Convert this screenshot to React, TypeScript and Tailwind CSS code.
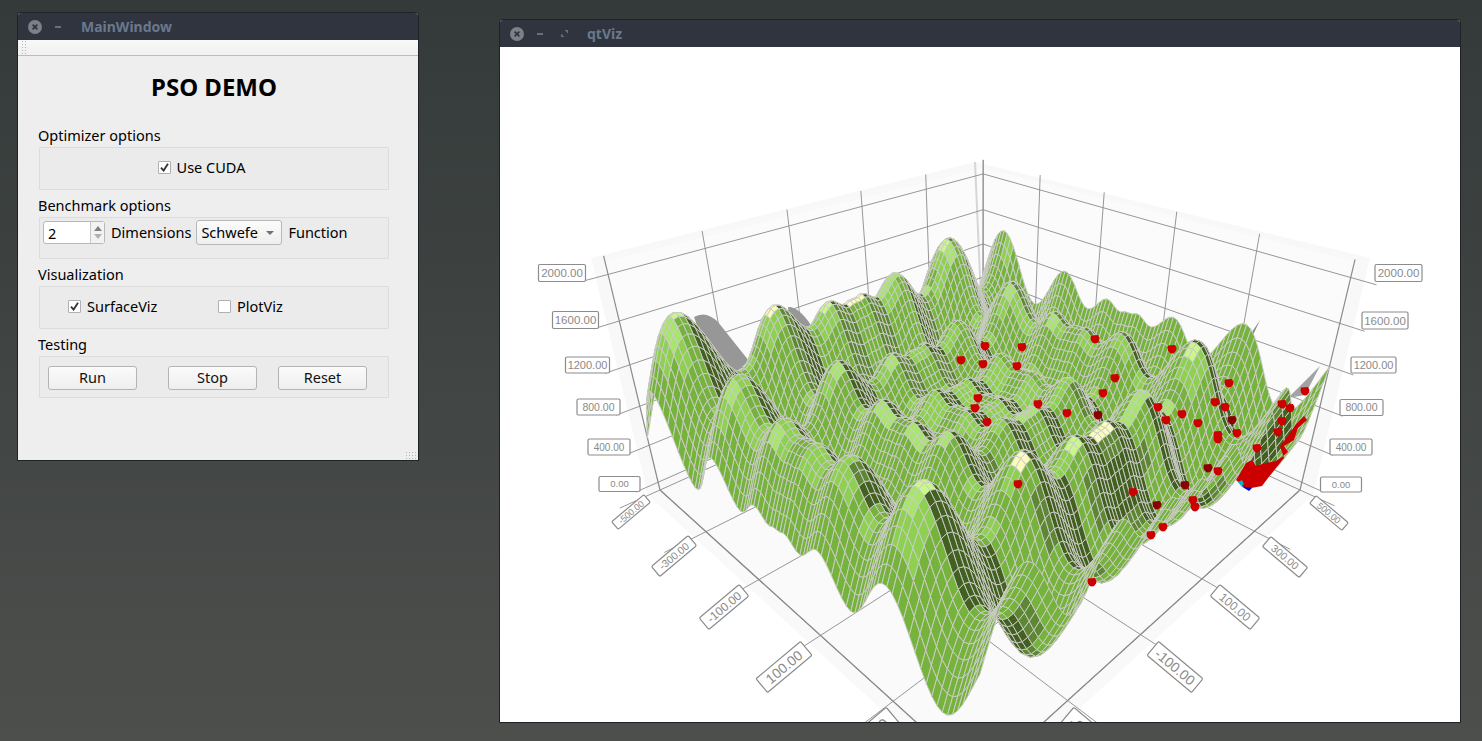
import React, { useMemo } from "react";

// ---------- projection of the 3D chart, in page coordinates ----------
const back = [983, 345], left = [660, 490], front = [980, 780], right = [1300, 490];
const den = (left[0] - front[0]) * (right[1] - front[1]) - (right[0] - front[0]) * (left[1] - front[1]);
const sx = back[0] - left[0] + front[0] - right[0];
const sy = back[1] - left[1] + front[1] - right[1];
const g = (sx * (right[1] - front[1]) - (right[0] - front[0]) * sy) / den;
const h = ((left[0] - front[0]) * sy - sx * (left[1] - front[1])) / den;
const H = [
  [left[0] - back[0] + g * left[0], right[0] - back[0] + h * right[0], back[0]],
  [left[1] - back[1] + g * left[1], right[1] - back[1] + h * right[1], back[1]],
  [g, h, 1],
];
const Za = -106, Zb = -197, Zc = -0.108;

function proj(s: number, t: number, z: number): [number, number, number] {
  const w = H[2][0] * s + H[2][1] * t + 1 + Zc * z;
  return [
    (H[0][0] * s + H[0][1] * t + H[0][2] + Za * z) / w,
    (H[1][0] * s + H[1][1] * t + H[1][2] + Zb * z) / w,
    w,
  ];
}
const zz = (v: number) => 0.04 + (0.92 * v) / 2000;
const schwefel = (a: number, b: number) =>
  837.96 - a * Math.sin(Math.sqrt(Math.abs(a))) - b * Math.sin(Math.sqrt(Math.abs(b)));
const fn = (s: number, t: number) => schwefel(-500 + 1000 * t, -500 + 1000 * (1 - s));

const pts = (arr: number[][]) => arr.map((p) => `${p[0].toFixed(1)},${p[1].toFixed(1)}`).join(" ");

function shade(dark: number, bright: number) {
  if (dark < -0.2) return "#42601f";
  if (dark < -0.06) return "#5d8733";
  if (bright < 0.8) return "#76b33d";
  if (bright < 0.9) return "#8ed052";
  if (bright < 0.96) return "#a8e56e";
  if (bright < 0.995) return "#c9f78d";
  return "#fbfbbd";
}

const N = 88;
function buildSurface() {
  const P = [0.1, -1.0, 1.4];
  const B0 = [0.35, -0.6, 1];
  const Bm = Math.hypot(B0[0], B0[1], B0[2]);
  const cells: { p: string; c: string; d: number }[] = [];
  const v: number[][] = [];
  for (let i = 0; i <= N; i++) {
    v.push([]);
    for (let j = 0; j <= N; j++) v[i].push(fn(i / N, j / N));
  }
  const C = 2;
  for (let i = 0; i < N; i++) {
    for (let j = 0; j < N; j++) {
      const q = [
        proj(i / N, j / N, zz(v[i][j])),
        proj((i + 1) / N, j / N, zz(v[i + 1][j])),
        proj((i + 1) / N, (j + 1) / N, zz(v[i + 1][j + 1])),
        proj(i / N, (j + 1) / N, zz(v[i][j + 1])),
      ];
      const ci = Math.min(N - C, i - (i % C));
      const cj = Math.min(N - C, j - (j % C));
      const du = (1000 * C) / N;
      const fa = (v[ci][cj + C] + v[ci + C][cj + C] - v[ci][cj] - v[ci + C][cj]) / (2 * du);
      const fb = (v[ci][cj] + v[ci][cj + C] - v[ci + C][cj] - v[ci + C][cj + C]) / (2 * du);
      const nx = -fa * 0.45, ny = -fb * 0.45, nz = 1;
      const m = Math.hypot(nx, ny, nz);
      const x = (cj + C / 2) / N, y = 1 - (ci + C / 2) / N, z = v[ci][cj] / 2000;
      const lx = P[0] - x, ly = P[1] - y, lz = P[2] - z;
      const lm = Math.hypot(lx, ly, lz);
      const D = (nx * lx + ny * ly + nz * lz) / (m * lm) - 0.18 * Math.max(0, x - 0.45);
      // highlights sit on the high ground: the saddles stay plain green
      const Br = (nx * B0[0] + ny * B0[1] + nz * B0[2]) / (m * Bm) + 0.5 * (v[ci][cj] / 1676 - 0.62);
      const d = (q[0][2] + q[1][2] + q[2][2] + q[3][2]) / 4;
      cells.push({ p: pts(q), c: shade(D, Br), d });
    }
  }
  cells.sort((a, b) => b.d - a.d);
  return cells;
}

const dots: [number, number, string?][] = [
  [961, 360], [985, 346], [983, 364], [978, 398], [975, 408], [987, 422], [1095, 339], [1022, 347], [1017, 366],
  [1115, 378], [1103, 393], [1038, 404], [1067, 413], [1098, 415, "#8a0000"], [1172, 349], [1229, 383], [1215, 402],
  [1225, 407], [1182, 414], [1198, 423], [1166, 420], [1158, 407], [1218, 435], [1218, 439], [1282, 404], [1305, 391],
  [1282, 421], [1278, 432], [1290, 408], [1237, 433], [1232, 420, "#8a0000"], [1018, 484], [1133, 492],
  [1157, 505, "#8a0000"], [1185, 485, "#8a0000"], [1218, 471], [1208, 468, "#8a0000"], [1257, 448], [1195, 507],
  [1193, 500], [1092, 582], [1163, 527], [1151, 535],
];

function Label({ x, y, w, hh, text, rot = 0, fs = 11 }: { x: number; y: number; w: number; hh: number; text: string; rot?: number; fs?: number }) {
  return (
    <g transform={`translate(${x} ${y}) rotate(${rot})`}>
      <rect x={-w / 2} y={-hh / 2} width={w} height={hh} rx={1.5} fill="#fff" stroke="#8c8c8c" strokeWidth={1.2} />
      <text x={0} y={fs * 0.36} textAnchor="middle" fontSize={fs} fill="#8a8a8a" fontFamily="'Liberation Sans', sans-serif">
        {text}
      </text>
    </g>
  );
}

function Chart() {
  const cells = useMemo(buildSurface, []);
  const ticks = [0, 0.2, 0.4, 0.6, 0.8, 1];
  const zs = [0, 400, 800, 1200, 1600, 2000];
  const gc = "#8b8b8b";
  const line = (a: number[], b: number[], k: string, w = 0.9) => (
    <line key={k} x1={a[0]} y1={a[1]} x2={b[0]} y2={b[1]} stroke={gc} strokeWidth={w} />
  );
  return (
    <svg viewBox="500 47 960 675" className="block h-[675px] w-[960px]">
      {/* walls and floor */}
      <polygon points="591,258 975,162 983,345 648,495" fill="#f8f8f8" />
      <polygon points="1370,258 975,162 983,345 1313,495" fill="#f8f8f8" />
      <polygon points="603,262 983,168 983,345 658,480" fill="#fbfbfb" />
      <polygon points="1357,262 983,168 983,345 1302,480" fill="#fbfbfb" />
      <polygon points="648,495 983,345 1313,495 980,800" fill="#f9f9f9" />
      <polygon points="655,497 983,352 1305,497 980,770" fill="#fafafa" />
      <line x1={975} y1={162} x2={983} y2={345} stroke="#d6d6d6" strokeWidth={2} />
      {/* grid */}
      {ticks.map((u) => {
        const a = proj(u, 0, 0), b = proj(u, 0, 1.03);
        const c = proj(0, u, 0), d = proj(0, u, 1.03);
        return (
          <g key={u}>
            {line(a, b, "a", u === 1 ? 1.2 : 0.9)}
            {line(c, d, "c", u === 1 ? 1.2 : 0.9)}
            {line(proj(u, -0.0, 0), proj(u, 1.08, 0), "f1")}
            {line(proj(0, u, 0), proj(1.09, u, 0), "f2")}
          </g>
        );
      })}
      {zs.map((v) => {
        const z = zz(v);
        return (
          <g key={v}>
            {line(proj(0, 0, z), proj(1.05, 0, z), "l")}
            {line(proj(0, 0, z), proj(0, 1.05, z), "r")}
          </g>
        );
      })}
      {line(proj(1, 0, 0), proj(1, 1.1, 0), "ax1", 1.3)}
      {line(proj(0, 1, 0), proj(1.1, 1, 0), "ax2", 1.3)}

      {/* hidden grey faces behind the surface */}
      <path d="M694 317 Q706 310 718 322 L749 361 L735 373 L702 340 Z" fill="#979797" />
      <path d="M788 307 Q798 306 811 325 L805 332 L790 320 Z" fill="#979797" />
      <path d="M1288 398 L1320 366 L1305 395 Z" fill="#a3a3a3" />
      <path d="M1236 372 L1260 320 L1240 350 Z" fill="#8a8a8a" />

      {/* surface */}
      <g stroke="#cbcbc7" strokeWidth={0.95} strokeLinejoin="round">
        {cells.map((c, i) => (
          <polygon key={i} points={c.p} fill={c.c} />
        ))}
      </g>

      {/* particles */}
      <g fill="#cc0000">
        <path d="M1236 480 L1242 470 L1246 463 L1252 460 L1256 466 L1262 464 L1276 461 L1282 457 L1288 452 L1284 446 L1294 440 L1298 428 L1307 420 L1304 416 L1296 424 L1288 436 L1280 446 L1284 458 L1268 478 L1262 486 L1246 489 Z" />
        {dots.map(([x, y, c], i) => (
          <path key={i} transform={`translate(${x} ${y})`} d="M-4 -3.5 L3 -4 L4.5 -1 L4 1.5 Q2.5 4.5 0 4.5 Q-2.5 4.5 -4 1.5 L-4.5 -1 Z" fill={c} />
        ))}
      </g>
      <path d="M1238 482 L1242 480 L1244 484 L1241 486 Z" fill="#00b8c8" />
      <path d="M1241 486 L1252 488 L1249 491 Z" fill="#0000cc" />

      {/* axis labels */}
      <Label x={562} y={273} w={47} hh={17} text="2000.00" fs={11.5} />
      <Label x={575.5} y={320} w={46} hh={17} text="1600.00" fs={11.5} />
      <Label x={587.5} y={365} w={44} hh={16} text="1200.00" fs={11} />
      <Label x={598.5} y={407} w={43} hh={16} text="800.00" fs={10.5} />
      <Label x={609} y={447} w={42} hh={16} text="400.00" fs={10} />
      <Label x={619.5} y={484} w={41} hh={15} text="0.00" fs={9.5} />
      <Label x={1398.5} y={273} w={47} hh={17} text="2000.00" fs={11.5} />
      <Label x={1385} y={320.5} w={46} hh={17} text="1600.00" fs={11.5} />
      <Label x={1373.5} y={365} w={45} hh={16} text="1200.00" fs={11} />
      <Label x={1361.5} y={407.5} w={43} hh={16} text="800.00" fs={10.5} />
      <Label x={1351} y={447} w={42} hh={16} text="400.00" fs={10} />
      <Label x={1341} y={484.5} w={41} hh={15} text="0.00" fs={9.5} />
      <Label x={631} y={512} w={42} hh={10} rot={-40} text="-500.00" fs={9} />
      <Label x={674} y={556} w={48} hh={13} rot={-40} text="-300.00" fs={10.5} />
      <Label x={724} y={607} w={52} hh={15} rot={-40} text="-100.00" fs={12} />
      <Label x={784} y={667} w={58} hh={18} rot={-40} text="100.00" fs={14} />
      <Label x={868} y={737} w={66} hh={22} rot={-40} text="300.00" fs={16} />
      <Label x={1329} y={513} w={42} hh={10} rot={40} text="500.00" fs={9} />
      <Label x={1285} y={557} w={48} hh={13} rot={40} text="300.00" fs={10.5} />
      <Label x={1235} y={607} w={52} hh={15} rot={40} text="100.00" fs={12} />
      <Label x={1175} y={667} w={58} hh={18} rot={40} text="-100.00" fs={14} />
      <Label x={1092} y={737} w={66} hh={22} rot={40} text="-300.00" fs={16} />
    </svg>
  );
}

function TitleBar({ title, maxIcon }: { title: string; maxIcon?: boolean }) {
  return (
    <div className="flex h-[27px] shrink-0 items-center rounded-t-[3px] bg-[#2f343f] pl-[10px]">
      <svg width="14" height="14" viewBox="0 0 14 14" className="shrink-0">
        <circle cx="7" cy="7" r="7" fill="#7c8087" />
        <path d="M4.6 4.6 L9.4 9.4 M9.4 4.6 L4.6 9.4" stroke="#2f343f" strokeWidth="1.7" />
      </svg>
      <div className="ml-[13px] h-[2px] w-[6px] shrink-0 bg-[#6a6e75]" />
      {maxIcon ? (
        <svg width="7" height="7" viewBox="0 0 7 7" className="ml-[18px] shrink-0">
          <path d="M3.5 0 H7 V3.5 Z M0 3.5 L3.5 7 H0 Z" fill="#6a6e75" />
        </svg>
      ) : null}
      <span className={`${maxIcon ? "ml-[19px]" : "ml-[20px]"} font-['Noto_Sans',sans-serif] text-[14px] leading-none font-bold text-[#6b788c]`}>
        {title}
      </span>
    </div>
  );
}

function Check({ checked }: { checked?: boolean }) {
  return (
    <span className="flex h-[13px] w-[13px] shrink-0 items-center justify-center rounded-[1px] border border-[#b0b0b0] bg-white">
      {checked ? (
        <svg width="9" height="9" viewBox="0 0 9 9">
          <path d="M1 4.6 L3.6 7.6 L8 0.8" fill="none" stroke="#333" strokeWidth="1.8" />
        </svg>
      ) : null}
    </span>
  );
}

function GroupLabel({ children }: { children: React.ReactNode }) {
  return <div className="-ml-px h-[27px] pt-[7px] text-[14.5px] leading-[17px] text-black">{children}</div>;
}

function Group({ className, children }: { className: string; children: React.ReactNode }) {
  return <div className={`rounded-[1px] border border-[#dcdcdc] bg-[#ebebeb] text-[14.5px] text-black ${className}`}>{children}</div>;
}

function Btn({ children, className }: { children: React.ReactNode; className?: string }) {
  return (
    <div className={`flex h-[24px] w-[89px] items-center justify-center rounded-[3px] border border-[#b4b4b4] bg-gradient-to-b from-[#fbfbfb] to-[#eeeeee] text-[#111] ${className ?? ""}`}>
      {children}
    </div>
  );
}

function Dots({ cols, rows }: { cols: number; rows: number }) {
  return (
    <div className="grid gap-[2px]" style={{ gridTemplateColumns: `repeat(${cols}, 1px)` }}>
      {Array.from({ length: cols * rows }).map((_, i) => (
        <span key={i} className="h-px w-px bg-[#b5b5b5]" />
      ))}
    </div>
  );
}

export default function App() {
  return (
    <div className="relative h-[741px] w-[1482px] overflow-hidden bg-gradient-to-b from-[#343a3a] to-[#4d4f4c] font-['Noto_Sans',sans-serif]">
      {/* MainWindow */}
      <div className="absolute top-[13px] left-[18px] flex h-[447px] w-[400px] flex-col rounded-t-[3px] bg-[#eeeeee] shadow-[0_0_0_1px_#1f2328]">
        <TitleBar title="MainWindow" />
        <div className="flex h-[16px] shrink-0 items-start border-b border-[#bcbcbc] bg-gradient-to-b from-[#f8f8f8] to-[#f0f0f0] pt-[1px] pl-[4px]">
          <Dots cols={2} rows={5} />
        </div>
        <div className="relative flex flex-1 flex-col pr-[29px] pl-[21px]">
          <div className="h-[64px] pt-[16px] text-center text-[24px] leading-[30px] font-bold text-black">PSO DEMO</div>
          <GroupLabel>Optimizer options</GroupLabel>
          <Group className="flex h-[43px] items-center justify-center gap-[6px] pr-[25px] pb-[2px]">
            <Check checked />
            <span>Use CUDA</span>
          </Group>
          <GroupLabel>Benchmark options</GroupLabel>
          <Group className="flex h-[42px] items-start pt-[3px] pl-[3px]">
            <div className="flex h-[23px] w-[62px] rounded-[3px] border border-[#b8b8b8] bg-white">
              <span className="flex-1 pl-[4px] leading-[22px]">2</span>
              <span className="flex w-[14px] flex-col items-center justify-center gap-[3px] border-l border-[#c8c8c8] bg-[#f2f2f2]">
                <span className="h-0 w-0 border-x-[4px] border-b-[5px] border-x-transparent border-b-[#808080]" />
                <span className="h-0 w-0 border-x-[4px] border-t-[5px] border-x-transparent border-t-[#b0b0b0]" />
              </span>
            </div>
            <span className="ml-[6px] leading-[23px]">Dimensions</span>
            <div className="-mt-[1px] ml-[5px] flex h-[25px] w-[86px] items-center rounded-[3px] border border-[#b8b8b8] bg-gradient-to-b from-[#fbfbfb] to-[#efefef] pl-[4px]">
              <span className="w-[58px] overflow-hidden leading-[23px] whitespace-nowrap">Schwefel</span>
              <span className="ml-[7px] h-0 w-0 border-x-[4px] border-t-[4px] border-x-transparent border-t-[#707070]" />
            </div>
            <span className="ml-[6px] leading-[23px]">Function</span>
          </Group>
          <GroupLabel>Visualization</GroupLabel>
          <Group className="flex h-[43px] items-center pb-[2px] pl-[28px]">
            <Check checked />
            <span className="ml-[6px] w-[131px]">SurfaceViz</span>
            <Check />
            <span className="ml-[6px]">PlotViz</span>
          </Group>
          <GroupLabel>Testing</GroupLabel>
          <Group className="flex h-[42px] items-start pt-[9px] pl-[8px]">
            <Btn>Run</Btn>
            <Btn className="ml-[31px]">Stop</Btn>
            <Btn className="ml-[21px]">Reset</Btn>
          </Group>
          <div className="absolute right-[2px] bottom-[1px] rotate-180">
            <Dots cols={4} rows={3} />
          </div>
        </div>
      </div>

      {/* qtViz */}
      <div className="absolute top-[20px] left-[500px] flex h-[702px] w-[960px] flex-col rounded-t-[3px] bg-white shadow-[0_0_0_1px_#1f2328]">
        <TitleBar title="qtViz" maxIcon />
        <Chart />
      </div>
    </div>
  );
}
